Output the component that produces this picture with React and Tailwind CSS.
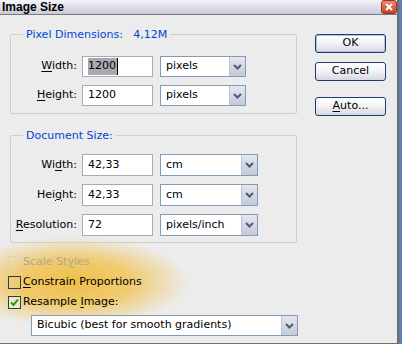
import React from 'react';

const font = { fontFamily: '"DejaVu Sans", Verdana, sans-serif' };

function U({ children }) {
  return <span className="underline underline-offset-[2px]">{children}</span>;
}

function Arrow() {
  return (
    <div className="w-[16px] h-full border-l border-[#b9c3d6] bg-gradient-to-b from-[#e4e6ef] to-[#c5c9d8] flex items-center justify-center">
      <svg width="9" height="6" viewBox="0 0 9 6">
        <path d="M1 1 L4.5 4.5 L8 1" stroke="#4d5a78" strokeWidth="2" fill="none" />
      </svg>
    </div>
  );
}

function Select({ value, w, h = 'h-[21px]' }) {
  return (
    <div className={`${w} ${h} border border-[#7f9db9] bg-white flex`}>
      <div className="flex-1 pl-[5px] flex items-center text-[11px] text-black">{value}</div>
      <Arrow />
    </div>
  );
}

function Field({ label, value, unit, sw, h, selected }) {
  return (
    <div className="flex items-center">
      <div className="w-[71px] text-right pr-[5px] text-[11px] text-black">{label}</div>
      <div className={`w-[71px] ${h} border border-[#a5acb2] bg-white flex items-center pl-[5px] text-[11px]`}>
        {selected ? (
          <span className="bg-[#a8a8b0] text-black pr-[1px] border-r border-black">{value}</span>
        ) : (
          value
        )}
      </div>
      <div className="ml-[7px]">
        <Select value={unit} w={sw} h={h} />
      </div>
    </div>
  );
}

function Group({ title, children, className }) {
  return (
    <fieldset className={`border border-[#d0d0bf] rounded-[2px] ml-[2px] w-[287px] px-0 ${className}`}>
      <legend className="ml-[12px] px-[3px] text-[11px] leading-[13px] text-[#0046d5]">{title}</legend>
      {children}
    </fieldset>
  );
}

function Btn({ children, def }) {
  return (
    <div className={`w-[71px] h-[19px] rounded-[3px] border border-[#1f3c70] bg-gradient-to-b from-white via-[#f2f2f5] to-[#d6d6e0] flex items-center justify-center text-[11px] text-black ${def ? 'shadow-[inset_0_0_0_1px_#a9c3ea]' : ''}`}>
      {children}
    </div>
  );
}

function Check({ checked, disabled, children }) {
  return (
    <div className="flex items-center h-[20px]">
      <div className={`w-[13px] h-[13px] border ${disabled ? 'border-[#d8d2bc]' : 'border-[#1f3f5c]'} flex items-center justify-center ${checked ? 'bg-white/40' : ''}`}>
        {checked && (
          <svg width="9" height="9" viewBox="0 0 9 9">
            <path d="M1 4.5 L3.5 7 L8 1.5" stroke="#21a121" strokeWidth="2" fill="none" />
          </svg>
        )}
      </div>
      <span className={`ml-[2px] text-[11px] ${disabled ? 'text-[#aca899]' : 'text-black'}`}>{children}</span>
    </div>
  );
}

export default function App() {
  return (
    <div className="w-[402px] h-[344px] bg-[#5c7fb4] overflow-hidden" style={font}>
      <div className="w-[399px] h-[344px] bg-[#ececec] border-r-2 border-b border-[#6f6f6f] relative">
        <div className="absolute left-[-45px] top-[236px] w-[235px] h-[92px] bg-[radial-gradient(ellipse_at_center,#f0bf4a_0%,rgba(241,194,80,0.8)_35%,rgba(242,200,100,0)_70%)]" />

        <div className="relative h-[15px] bg-gradient-to-b from-[#f4f4fa] to-[#c9cad8] border-b border-[#7a7a85] flex items-center justify-between">
          <span className="pl-[2px] text-[12px] font-bold text-black" style={{ fontFamily: '"Liberation Sans", Arial, sans-serif' }}>Image Size</span>
          <div className="w-[16px] h-[14px] rounded-[3px] bg-gradient-to-b from-[#e98a72] to-[#c5402a] border border-[#a03020] flex items-center justify-center">
            <svg width="8" height="8" viewBox="0 0 8 8">
              <path d="M1 1 L7 7 M7 1 L1 7" stroke="white" strokeWidth="2" />
            </svg>
          </div>
        </div>

        <div className="relative flex">
          <div className="w-[300px] pl-[8px]">
            <Group title={<span>Pixel Dimensions:&nbsp;&nbsp;&nbsp;4,12M</span>} className="mt-[13px] pt-[15px] pb-[7px]">
              <div className="flex flex-col gap-[8px]">
                <Field label={<><U>W</U>idth:</>} value="1200" unit="pixels" sw="w-[86px]" h="h-[21px]" selected />
                <Field label={<><U>H</U>eight:</>} value="1200" unit="pixels" sw="w-[86px]" h="h-[21px]" />
              </div>
            </Group>
            <Group title="Document Size:" className="mt-[15px] pt-[12px] pb-[6px]">
              <div className="flex flex-col gap-[8px]">
                <Field label={<>Wi<U>d</U>th:</>} value="42,33" unit="cm" sw="w-[98px]" h="h-[22px]" />
                <Field label={<>Hei<U>g</U>ht:</>} value="42,33" unit="cm" sw="w-[98px]" h="h-[22px]" />
                <Field label={<><U>R</U>esolution:</>} value="72" unit="pixels/inch" sw="w-[98px]" h="h-[22px]" />
              </div>
            </Group>
            <div className="mt-[9px]">
              <Check disabled>Scale St<U>y</U>les</Check>
              <Check><U>C</U>onstrain Proportions</Check>
              <Check checked>Resample <U>I</U>mage:</Check>
            </div>
            <div className="ml-[23px] mt-[3px]">
              <Select value="Bicubic (best for smooth gradients)" w="w-[267px]" />
            </div>
          </div>
          <div className="ml-[15px] pt-[19px] flex flex-col">
            <Btn def>OK</Btn>
            <div className="mt-[9px]"><Btn>Cancel</Btn></div>
            <div className="mt-[16px]"><Btn><U>A</U>uto...</Btn></div>
          </div>
        </div>
      </div>
    </div>
  );
}
